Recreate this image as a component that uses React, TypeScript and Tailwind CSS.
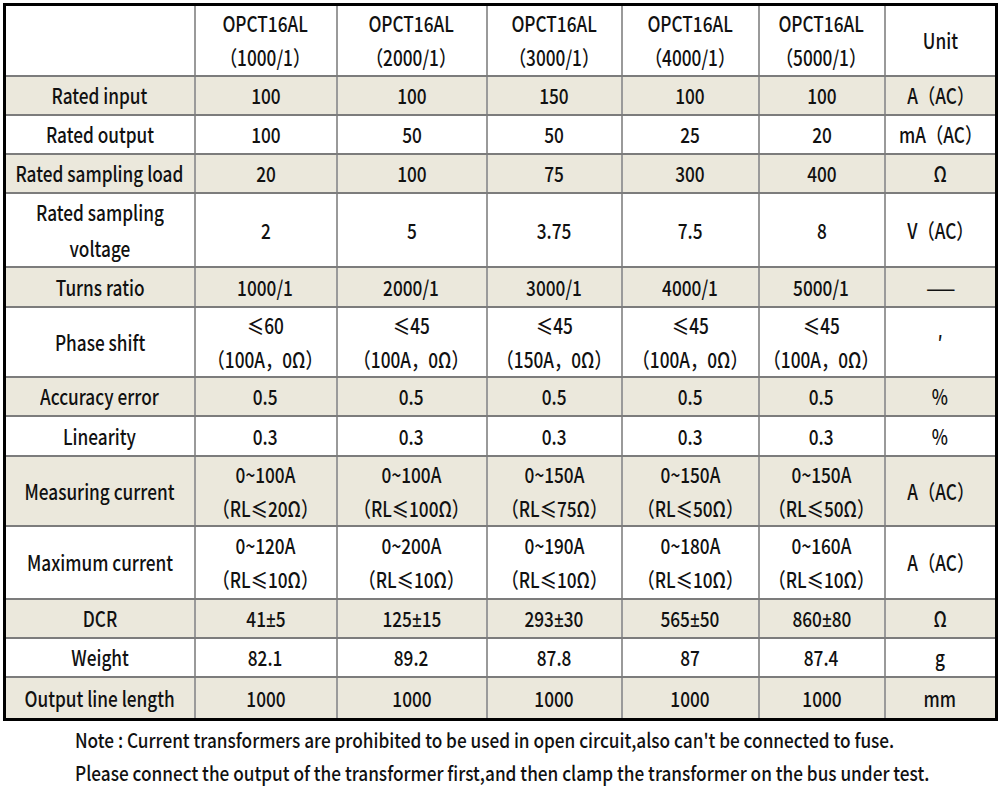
import React from 'react';

type Row = {
  label: React.ReactNode;
  vals: (string | string[])[];
  unit: string;
  shade: boolean;
  h: string;
};

const rows: Row[] = [
  { label: 'Rated input', vals: ['100', '100', '150', '100', '100'], unit: 'A（AC）', shade: true, h: 'h-[39px]' },
  { label: 'Rated output', vals: ['100', '50', '50', '25', '20'], unit: 'mA（AC）', shade: false, h: 'h-[39px]' },
  { label: 'Rated sampling load', vals: ['20', '100', '75', '300', '400'], unit: 'Ω', shade: true, h: 'h-[39px]' },
  {
    label: (
      <>
        Rated sampling
        <br />
        voltage
      </>
    ),
    vals: ['2', '5', '3.75', '7.5', '8'],
    unit: 'V（AC）',
    shade: false,
    h: 'h-[71px]',
  },
  { label: 'Turns ratio', vals: ['1000/1', '2000/1', '3000/1', '4000/1', '5000/1'], unit: '——', shade: true, h: 'h-[40px]' },
  {
    label: 'Phase shift',
    vals: [
      ['≤60', '（100A，0Ω）'],
      ['≤45', '（100A，0Ω）'],
      ['≤45', '（150A，0Ω）'],
      ['≤45', '（100A，0Ω）'],
      ['≤45', '（100A，0Ω）'],
    ],
    unit: '′',
    shade: false,
    h: 'h-[70px]',
  },
  { label: 'Accuracy error', vals: ['0.5', '0.5', '0.5', '0.5', '0.5'], unit: '%', shade: true, h: 'h-[39px]' },
  { label: 'Linearity', vals: ['0.3', '0.3', '0.3', '0.3', '0.3'], unit: '%', shade: false, h: 'h-[40px]' },
  {
    label: 'Measuring current',
    vals: [
      ['0~100A', '（RL≤20Ω）'],
      ['0~100A', '（RL≤100Ω）'],
      ['0~150A', '（RL≤75Ω）'],
      ['0~150A', '（RL≤50Ω）'],
      ['0~150A', '（RL≤50Ω）'],
    ],
    unit: 'A（AC）',
    shade: true,
    h: 'h-[69px]',
  },
  {
    label: 'Maximum current',
    vals: [
      ['0~120A', '（RL≤10Ω）'],
      ['0~200A', '（RL≤10Ω）'],
      ['0~190A', '（RL≤10Ω）'],
      ['0~180A', '（RL≤10Ω）'],
      ['0~160A', '（RL≤10Ω）'],
    ],
    unit: 'A（AC）',
    shade: false,
    h: 'h-[73px]',
  },
  { label: 'DCR', vals: ['41±5', '125±15', '293±30', '565±50', '860±80'], unit: 'Ω', shade: true, h: 'h-[39px]' },
  { label: 'Weight', vals: ['82.1', '89.2', '87.8', '87', '87.4'], unit: 'g', shade: false, h: 'h-[39px]' },
  { label: 'Output line length', vals: ['1000', '1000', '1000', '1000', '1000'], unit: 'mm', shade: true, h: 'h-[43px]' },
];

const models = ['1000/1', '2000/1', '3000/1', '4000/1', '5000/1'];

const cell =
  'p-0 text-center align-middle border-x-2 border-x-[#9a9a9a] border-y-2 border-y-[#7c7c7c]';

// the CJK font draws ± full width, so that sign gets a Latin face
function withPlusMinus(s: string) {
  if (!s.includes('±')) return s;
  const parts = s.split('±');
  return (
    <>
      {parts[0]}
      <span className="font-['Noto_Sans',sans-serif]">±</span>
      {parts[1]}
    </>
  );
}

function Txt({ children }: { children: React.ReactNode }) {
  return <span className="shrink-0 scale-x-[0.82] whitespace-nowrap">{children}</span>;
}

function Value({ v }: { v: string | string[] }) {
  if (Array.isArray(v)) {
    return (
      <div className="flex flex-col items-center leading-[34px]">
        <Txt>{v[0]}</Txt>
        <Txt>{v[1]}</Txt>
      </div>
    );
  }
  return (
    <div className="flex flex-col items-center">
      <Txt>{withPlusMinus(v)}</Txt>
    </div>
  );
}

export default function App() {
  return (
    <div className="w-[1000px] h-[791px] bg-white text-[#111] font-['Noto_Sans_CJK_SC',sans-serif] font-medium overflow-hidden">
      <table className="ml-[3px] mt-[3px] w-[992px] table-fixed border-collapse border-[3px] border-black text-[21px] leading-[34px]">
        <colgroup>
          <col className="w-[190px]" />
          <col className="w-[142px]" />
          <col className="w-[150px]" />
          <col className="w-[135px]" />
          <col className="w-[137px]" />
          <col className="w-[126px]" />
          <col className="w-[112px]" />
        </colgroup>
        <thead>
          <tr className="h-[71px] bg-white">
            <th className={cell}></th>
            {models.map((m) => (
              <th key={m} className={`${cell} font-medium`}>
                <div className="flex flex-col items-center leading-[34px]">
                  <Txt>OPCT16AL</Txt>
                  <Txt>（{m}）</Txt>
                </div>
              </th>
            ))}
            <th className={`${cell} font-medium`}>
              <div className="flex flex-col items-center">
                <Txt>Unit</Txt>
              </div>
            </th>
          </tr>
        </thead>
        <tbody>
          {rows.map((r, i) => (
            <tr key={i} className={`${r.h} ${r.shade ? 'bg-[#ebe8dc]' : 'bg-white'}`}>
              <td className={cell}>
                <div className="flex flex-col items-center leading-[36px]">
                  <Txt>{r.label}</Txt>
                </div>
              </td>
              {r.vals.map((v, j) => (
                <td key={j} className={cell}>
                  <Value v={v} />
                </td>
              ))}
              <td className={cell}>
                <div className="flex flex-col items-center">
                  <Txt>{r.unit}</Txt>
                </div>
              </td>
            </tr>
          ))}
        </tbody>
      </table>
      <div className="mt-[2px] pl-[75px] text-[20px] leading-[33px]">
        <p className="w-max origin-left scale-x-[0.86] whitespace-nowrap">
          Note : Current transformers are prohibited to be used in open circuit,also can't be connected to fuse.
        </p>
        <p className="w-max origin-left scale-x-[0.86] whitespace-nowrap">
          Please connect the output of the transformer first,and then clamp the transformer on the bus under test.
        </p>
      </div>
    </div>
  );
}
